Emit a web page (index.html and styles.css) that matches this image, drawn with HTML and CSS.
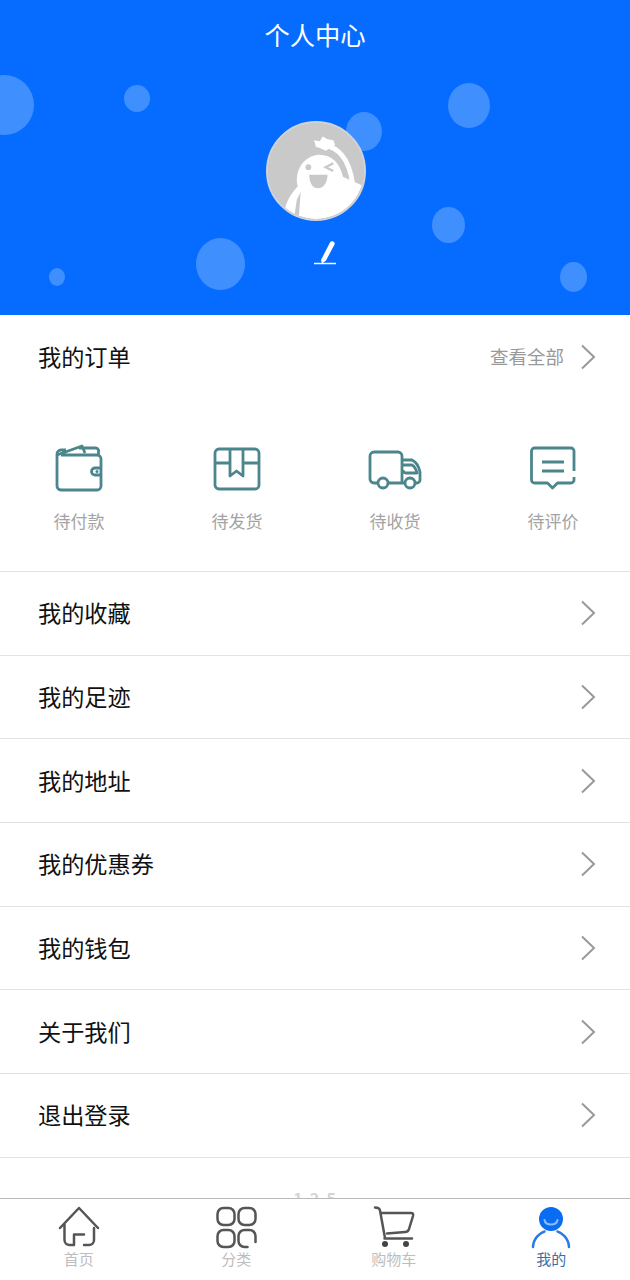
FILE: index.html
```html
<!DOCTYPE html>
<html lang="zh">
<head>
<meta charset="utf-8">
<title>个人中心</title>
<link rel="stylesheet" href="styles.css">
</head>
<body>
<div class="page">
  <header class="hero">
    <i class="bubble b1"></i><i class="bubble b2"></i><i class="bubble b3"></i><i class="bubble b4"></i>
    <i class="bubble b5"></i><i class="bubble b6"></i><i class="bubble b7"></i><i class="bubble b8"></i>
    <h1 class="hero-title">个人中心</h1>
    <div class="avatar">
      <svg viewBox="0 0 100 100" width="96" height="96">
        <defs><clipPath id="av"><circle cx="50" cy="50" r="50"/></clipPath></defs>
        <g clip-path="url(#av)">
          <rect width="100" height="100" fill="#c9c9c9"/>
          <path d="M17 100C16 84 24 74 31 66C27 50 37 34 53 33C67 33 75 42 78 56L100 66V100Z" fill="#fff"/>
          <path d="M58 23C72 25 84 36 88 62" fill="none" stroke="#fff" stroke-width="5" stroke-linecap="round"/>
          <path d="M48 18L54 19L57 14L62 17L68 18L70 23L65 26L60 29L54 26L50 25Z" fill="#fff"/>
          <path d="M27 100L30 80L34 72L32 100Z" fill="#c9c9c9"/>
          <circle cx="42" cy="46" r="3" fill="#c9c9c9"/>
          <path d="M68 42L60 46L68 50" fill="none" stroke="#c9c9c9" stroke-width="2.400"/>
          <path d="M43 54H62C62 62 58 68 52 68C46 68 43 62 43 54Z" fill="#c9c9c9"/>
        </g>
      </svg>
    </div>
    <svg class="pen" viewBox="0 0 24 26" width="24" height="26">
      <path d="M8 20L17 2.500C18.500 0 22.500 1.500 21.500 4.500L13 20.500L9 23.500Z" fill="#fff"/>
      <path d="M1 23.500H23" stroke="#fff" stroke-width="1.500"/>
    </svg>
  </header>

  <section class="order-head">
    <span class="row-label">我的订单</span>
    <span class="order-all">查看全部</span>
    <svg class="chev" viewBox="0 0 16 26" width="16" height="26"><path d="M2 1.500L14 13L2 24.500" /></svg>
  </section>

  <section class="order-grid">
    <div class="order-item">
      <svg class="oi" viewBox="0 0 50 50" width="50" height="50">
        <path d="M7 11H43A4 4 0 0 1 47 15V42A4 4 0 0 1 43 46H7A4 4 0 0 1 3 42V10A4 4 0 0 1 7 6H12M3 11L28 2L31 9M25 4H42A3 3 0 0 1 44.500 8V11M47 24H41A3.500 3.500 0 0 0 41 31H47"/>
        <circle class="dot" cx="43" cy="27.500" r="1.500"/>
      </svg>
      <span class="oi-label">待付款</span>
    </div>
    <div class="order-item">
      <svg class="oi" viewBox="0 0 50 50" width="50" height="50">
        <path d="M7 5H43A4 4 0 0 1 47 9V41A4 4 0 0 1 43 45H7A4 4 0 0 1 3 41V9A4 4 0 0 1 7 5ZM3 19H18M31 19H47M18 5V32L24.500 27L31 32V5"/>
      </svg>
      <span class="oi-label">待发货</span>
    </div>
    <div class="order-item">
      <svg class="oi" viewBox="0 0 54 50" width="54" height="50">
        <path d="M10 39H6A4 4 0 0 1 2 35V12A4 4 0 0 1 6 8H30A4 4 0 0 1 34 12V39H20M34 16H44C48 18 51 23 52 28V36A3 3 0 0 1 49 39H47M37 39H34M34 21H44C46 22 48 25 49 29H38A3 3 0 0 1 35 26"/>
        <circle cx="15" cy="39" r="5"/><circle cx="42" cy="39" r="5"/>
      </svg>
      <span class="oi-label">待收货</span>
    </div>
    <div class="order-item">
      <svg class="oi" viewBox="0 0 50 50" width="50" height="50">
        <path d="M46 27V7A3 3 0 0 0 43 4H6.500A3 3 0 0 0 3.500 7V36A3 3 0 0 0 6.500 39H19.500L24.500 44L29.500 39H43A3 3 0 0 0 46 36V33M14 18H36M14 27H36"/>
      </svg>
      <span class="oi-label">待评价</span>
    </div>
  </section>

  <nav class="menu">
    <a class="menu-row"><span class="row-label">我的收藏</span><svg class="chev" viewBox="0 0 16 26" width="16" height="26"><path d="M2 1.500L14 13L2 24.500"/></svg></a>
    <a class="menu-row"><span class="row-label">我的足迹</span><svg class="chev" viewBox="0 0 16 26" width="16" height="26"><path d="M2 1.500L14 13L2 24.500"/></svg></a>
    <a class="menu-row"><span class="row-label">我的地址</span><svg class="chev" viewBox="0 0 16 26" width="16" height="26"><path d="M2 1.500L14 13L2 24.500"/></svg></a>
    <a class="menu-row"><span class="row-label">我的优惠券</span><svg class="chev" viewBox="0 0 16 26" width="16" height="26"><path d="M2 1.500L14 13L2 24.500"/></svg></a>
    <a class="menu-row"><span class="row-label">我的钱包</span><svg class="chev" viewBox="0 0 16 26" width="16" height="26"><path d="M2 1.500L14 13L2 24.500"/></svg></a>
    <a class="menu-row"><span class="row-label">关于我们</span><svg class="chev" viewBox="0 0 16 26" width="16" height="26"><path d="M2 1.500L14 13L2 24.500"/></svg></a>
    <a class="menu-row"><span class="row-label">退出登录</span><svg class="chev" viewBox="0 0 16 26" width="16" height="26"><path d="M2 1.500L14 13L2 24.500"/></svg></a>
  </nav>
  <div class="version">1.2.5</div>

  <footer class="tabbar">
    <div class="tab">
      <svg class="ti" viewBox="0 0 44 44" width="44" height="44">
        <path d="M3 23L22 3L41 23M7.500 19V35A5 5 0 0 0 12.500 40H17V29.500H27M27 40H32A5 5 0 0 0 37 35V23"/>
      </svg>
      <span class="tab-label">首页</span>
    </div>
    <div class="tab">
      <svg class="ti" viewBox="0 0 44 44" width="44" height="44">
        <rect x="3.500" y="3" width="17" height="17" rx="6"/><rect x="24.500" y="3" width="17" height="17" rx="6"/>
        <rect x="3.500" y="25" width="17" height="17" rx="6"/>
        <path d="M33.500 42H30.500A6 6 0 0 1 24.500 36V31A6 6 0 0 1 30.500 25H35.500A6 6 0 0 1 41.500 31V37"/>
      </svg>
      <span class="tab-label">分类</span>
    </div>
    <div class="tab">
      <svg class="ti" viewBox="0 0 44 44" width="44" height="44">
        <path d="M3 2.500C6 2.500 7.500 3 8 5.500L13 33M9 8H39C41 8 41.500 9 41 11L37 24C36.500 26 35.500 27 33 27L15 28.500M12.500 33.500H40"/>
        <circle class="wheel" cx="13" cy="39" r="3"/><circle class="wheel" cx="34" cy="39" r="3"/>
      </svg>
      <span class="tab-label">购物车</span>
    </div>
    <div class="tab tab-on">
      <svg class="ti" viewBox="0 0 44 44" width="44" height="44">
        <circle class="me-head" cx="22" cy="14" r="12"/>
        <path class="me-smile" d="M15.500 15C16.500 21 27.500 21 28.500 15"/>
        <path class="me-body" d="M4 42C4.500 33 11 28 15.500 26.500M40 42C39.500 33 33 28 28.500 26.500"/>
      </svg>
      <span class="tab-label">我的</span>
    </div>
  </footer>
</div>
</body>
</html>
```
FILE: styles.css
```css
* { box-sizing: border-box; }
html, body { margin: 0; padding: 0; }
body {
  background: #fff;
  font-family: "Noto Sans CJK SC", "Noto Sans", sans-serif;
  color: #111;
}
.page { position: relative; width: 630px; height: 1280px; overflow: hidden; background: #fff; }

.hero {
  position: relative;
  height: 315px;
  background: #056cff;
  display: flex;
  flex-direction: column;
  align-items: center;
  overflow: hidden;
}
.hero-title {
  position: relative;
  margin: 16px 0 0;
  font-size: 25.300px;
  line-height: 36px;
  font-weight: 400;
  color: #fff;
}
.bubble { position: absolute; border-radius: 50%; background: rgba(255, 255, 255, 0.24); }
.b1 { left: -26px; top: 75px; width: 60px; height: 60px; }
.b2 { left: 124px; top: 85px; width: 26px; height: 27px; }
.b3 { left: 448px; top: 83px; width: 42px; height: 45px; }
.b4 { left: 346px; top: 112px; width: 36px; height: 39px; }
.b5 { left: 432px; top: 207px; width: 33px; height: 36px; }
.b6 { left: 196px; top: 238px; width: 49px; height: 52px; }
.b7 { left: 49px; top: 268px; width: 16px; height: 18px; }
.b8 { left: 560px; top: 262px; width: 27px; height: 30px; }

.avatar {
  position: relative;
  margin: 69px 0 0 1px;
  width: 100px;
  height: 100px;
  border-radius: 50%;
  border: 2px solid #cfd3d8;
  overflow: hidden;
  background: #c9c9c9;
}
.avatar svg { display: block; }
.pen { position: relative; margin: 19px 0 0 20px; }

.order-head {
  height: 84px;
  padding: 0 34px 0 38px;
  display: flex;
  align-items: center;
}
.row-label { font-size: 23.200px; line-height: 34px; padding-bottom: 2px; color: #111; }
.order-all { margin-left: auto; margin-right: 16px; padding-bottom: 2px; font-size: 18.500px; color: #999; }
.chev { display: block; flex: none; }
.chev path { fill: none; stroke: #999; stroke-width: 2; }

.order-grid {
  height: 173px;
  display: grid;
  grid-template-columns: repeat(4, 158px);
  padding-top: 45px;
  border-bottom: 1px solid #e3e3e3;
}
.order-item { display: flex; flex-direction: column; align-items: center; }
.oi { display: block; }
.oi path, .oi circle { fill: none; stroke: #4a868c; stroke-width: 2.800; stroke-linejoin: round; }
.oi .dot { stroke: none; fill: #4a868c; }
.oi-label { margin-top: 15px; font-size: 17px; line-height: 24px; color: #a3a3a3; }

.menu-row {
  height: 83.700px;
  padding: 0 34px 0 38px;
  display: flex;
  align-items: center;
  justify-content: space-between;
  border-bottom: 1px solid #e3e3e3;
}

.version {
  margin-top: 28px;
  text-align: center;
  font-size: 16px;
  line-height: 24px;
  font-weight: 700;
  letter-spacing: 1px;
  color: #d4d4d4;
}

.tabbar {
  position: absolute;
  left: 0;
  right: 0;
  bottom: 0;
  height: 82px;
  background: #fff;
  border-top: 1px solid #b9b9b9;
  display: grid;
  grid-template-columns: repeat(4, 1fr);
}
.tab { display: flex; flex-direction: column; align-items: center; padding-top: 6px; }
.ti { display: block; }
.ti path, .ti rect { fill: none; stroke: #555; stroke-width: 2.500; stroke-linecap: round; stroke-linejoin: round; }
.ti .wheel { fill: #444; }
.ti .me-head { fill: #0a6cf3; }
.ti .me-smile { stroke: #8dbcfa; stroke-width: 2; }
.ti .me-body { stroke: #2c7be5; }
.tab-label { font-size: 15px; line-height: 20px; margin-top: 0; color: #bdbdbd; }
.tab-on .tab-label { color: #3a6ea8; }
```
